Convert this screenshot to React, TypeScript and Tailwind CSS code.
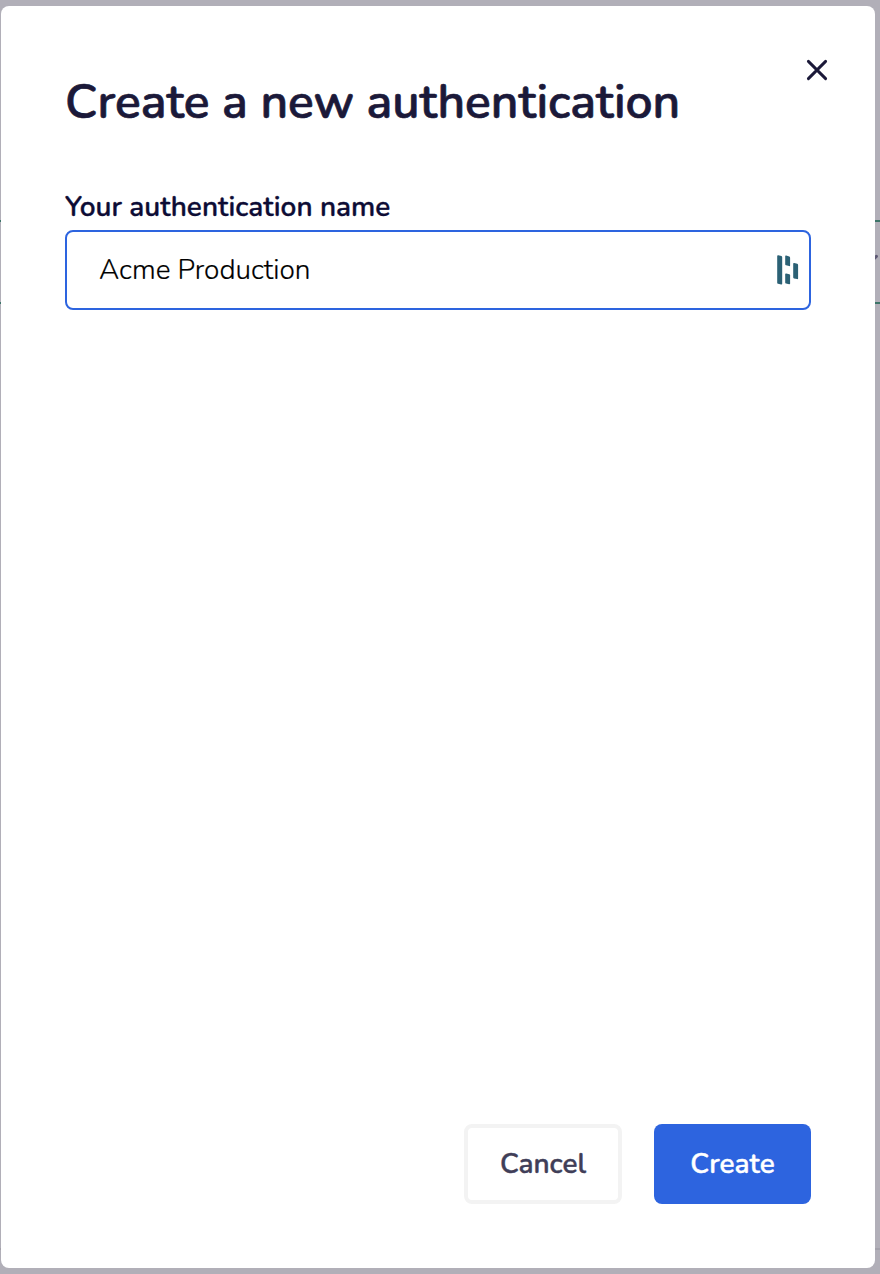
import { useState } from "react";

// Page edges that stay visible around the dialog
function Backdrop() {
    return (
        <div className="absolute inset-0" aria-hidden="true">
            <div className="absolute inset-x-0 top-[220px] h-[84px] border-y-2 border-[#3c7468]" />
            <div className="absolute inset-x-0 top-[1248px] h-0.5 bg-[#a3a1ab]" />
            <svg className="absolute top-[254px] left-[870px] h-2 w-2.5" viewBox="0 0 10 8" fill="none">
                <path d="M1 7.5 6.4 2.4" stroke="#5c5873" strokeWidth="3" strokeLinecap="round" />
            </svg>
        </div>
    );
}

function CloseIcon() {
    return (
        <svg className="size-6" viewBox="0 0 24 24" fill="none" stroke="currentColor" strokeWidth="2.9" strokeLinecap="round">
            <path d="M3.4 3.4 20.6 20.6M20.6 3.4 3.4 20.6" />
        </svg>
    );
}

function PasswordManagerIcon() {
    return (
        <svg className="h-[30px] w-[22px]" viewBox="0 0 22 30" fill="#2b6175">
            <path d="M.2 1.2Q.2.1 1.3.3L4.4 1.1Q5.2 1.3 5.2 2.2V28.7Q5.2 29.7 4.2 29.5L1 28.8Q.2 28.6.2 27.7Z" />
            <path d="M8.2 1.2Q8.2.3 9.2.6L12.3 1.6Q13.1 1.9 13.1 2.8V10.5Q13.1 11.4 12.1 11.1L9 10.3Q8.2 10 8.2 9.2Z" />
            <path d="M8.2 19.2Q8.2 18.3 9.2 18.5L12.3 19.2Q13.1 19.4 13.1 20.3V28.4Q13.1 29.4 12.1 29.2L9 28.5Q8.2 28.3 8.2 27.5Z" />
            <path d="M16.2 8.7Q16.2 7.8 17.2 8L20.3 8.8Q21.1 9 21.1 9.9V23.4Q21.1 24.3 20.1 24.1L17 23.4Q16.2 23.2 16.2 22.3Z" />
        </svg>
    );
}

export default function App() {
    const [name, setName] = useState("Acme Production");

    return (
        <div className="relative h-[1274px] w-[880px] overflow-hidden bg-[#b1afb8] pt-1.5 pl-px font-['Nunito','Open_Sans',sans-serif]">
            <Backdrop />
            <div
                role="dialog"
                aria-labelledby="dialog-title"
                className="relative flex h-[1262px] w-[874px] flex-col rounded-lg bg-white px-16 pt-[68px] pb-16"
            >
                <button type="button" aria-label="Close" className="absolute top-[52px] right-[46px] text-[#1b1939]">
                    <CloseIcon />
                </button>
                <h1
                    id="dialog-title"
                    className="text-[48px] leading-[56px] font-semibold tracking-[-0.04px] whitespace-nowrap text-[#1b1939] [-webkit-text-stroke:0.7px_#1b1939]"
                >
                    Create a new authentication
                </h1>

                <label
                    htmlFor="auth-name"
                    className="mt-[57px] text-[28px] leading-10 font-semibold text-[#0d0c35] [-webkit-text-stroke:0.35px_#0d0c35]"
                >
                    Your authentication name
                </label>
                <div className="mt-[3px] flex h-20 items-center rounded-lg border-2 border-[#2d64df] pr-2.5 pl-8">
                    <input
                        id="auth-name"
                        value={name}
                        onChange={(e) => setName(e.target.value)}
                        className="min-w-0 flex-1 text-[28px] leading-10 font-light text-black outline-none [-webkit-text-stroke:0.2px_#000]"
                    />
                    <PasswordManagerIcon />
                </div>

                <div className="mt-auto flex justify-end gap-8 text-[28px] leading-10 font-semibold [-webkit-text-stroke:0.4px_currentColor]">
                    <button type="button" className="h-20 w-[158px] rounded-lg border-4 border-[#f3f3f3] text-[#403e58]">
                        Cancel
                    </button>
                    <button type="button" className="h-20 w-[157px] rounded-lg bg-[#2d64df] text-white">
                        Create
                    </button>
                </div>
            </div>
        </div>
    );
}
